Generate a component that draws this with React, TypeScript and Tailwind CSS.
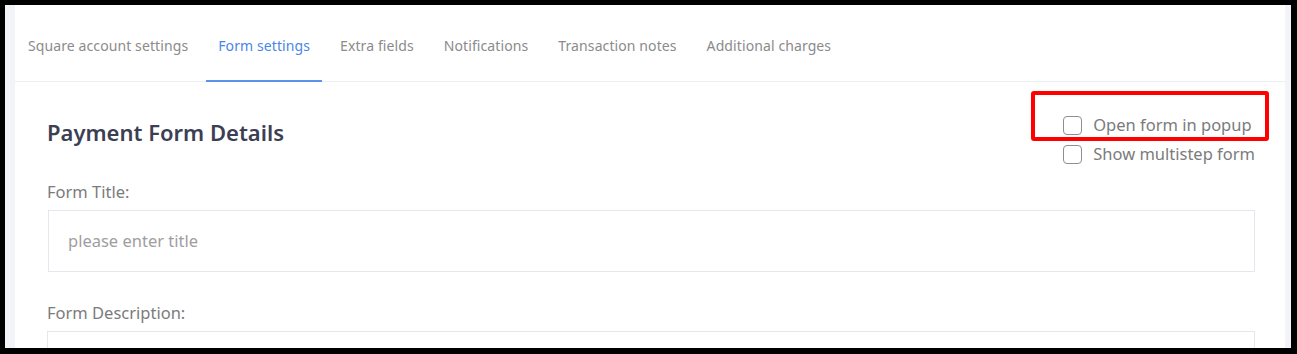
const tabs = [
  "Square account settings",
  "Form settings",
  "Extra fields",
  "Notifications",
  "Transaction notes",
  "Additional charges",
];

function Checkbox({ label }: { label: string }) {
  return (
    <label className="flex h-[29px] items-center gap-[11px] text-[16.5px] text-[#7b7b7b]">
      <span className="h-[19px] w-[19px] rounded-[4px] border border-[#8f8f8f] bg-white" />
      <span>{label}</span>
    </label>
  );
}

export default function App() {
  return (
    <div
      className="relative h-[354px] w-[1297px] border-b-[6px] border-l-[5px] border-r-[6px] border-t-[5px] border-black bg-[#f3f4f8] pl-[10px] pr-[6px]"
      style={{ fontFamily: '"Noto Sans", "Open Sans", sans-serif' }}
    >
      <div className="h-full overflow-hidden bg-white">
        {/* tab bar */}
        <div className="flex gap-[6px] border-b border-[#eceef3] pl-px">
          {tabs.map((t, i) => (
            <div
              key={t}
              className={`-mb-px border-b-2 px-3 pb-[24px] pt-[31px] text-[14px] leading-5 tracking-[0.1px] ${
                i === 1 ? "border-[#5b93ea] text-[#4a86e8]" : "border-transparent text-[#8b8b8b]"
              }`}
            >
              {t}
            </div>
          ))}
        </div>

        {/* body */}
        <div className="pl-[32px] pr-[30px] pt-[29px]">
          <div className="flex items-start justify-between">
            <h2 className="mt-[7px] text-[22px] font-semibold leading-7 text-[#3c3f54]">
              Payment Form Details
            </h2>
            <div className="flex flex-col">
              <Checkbox label="Open form in popup" />
              <Checkbox label="Show multistep form" />
            </div>
          </div>

          <div className="mt-[11px] text-[16.5px] leading-6 text-[#7b7b7b]">Form Title:</div>
          <div className="ml-px mt-[6px] flex h-[62px] items-center border border-[#e6e7ee] pl-[19px] text-[16.5px] text-[#9e9e9e]">
            please enter title
          </div>

          <div className="mt-[29px] text-[16.5px] leading-6 text-[#7b7b7b]">Form Description:</div>
          <div className="mt-[6px] h-[62px] border border-[#e6e7ee]" />
        </div>
      </div>

      {/* annotation box */}
      <div className="absolute left-[1026px] top-[86px] h-[50px] w-[238px] rounded-[3px] border-[4px] border-[#ff0000]" />
    </div>
  );
}
